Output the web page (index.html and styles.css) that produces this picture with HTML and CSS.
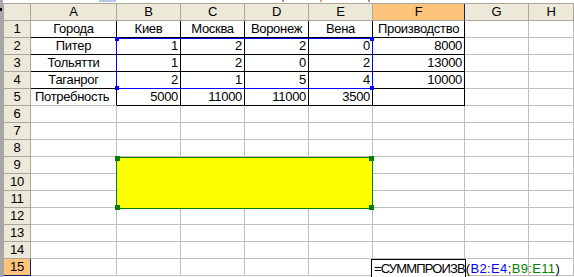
FILE: index.html
```html
<!doctype html>
<html lang="ru">
    <head>
        <meta charset="UTF-8" />
        <title>Книга1</title>
        <link rel="stylesheet" href="styles.css">
    </head>
    <body>
        <div class="window">
            <div class="edge"><span class="edge-mark"></span></div>
            <div class="main">
                <!-- bottom pixels of the formula bar above the sheet -->
                <div class="topstrip">
                    <span class="namebox-btn"></span>
                    <span class="speck speck-dark" style="left: 279px"></span>
                    <span class="speck speck-orange" style="left: 317px"></span>
                    <span class="speck speck-dark" style="left: 365px"></span>
                </div>
                <div class="sheet">
                    <div class="grid">
                        <!-- column headers -->
                        <div class="hd corner"></div>
                        <div class="hd col">A</div>
                        <div class="hd col">B</div>
                        <div class="hd col">C</div>
                        <div class="hd col">D</div>
                        <div class="hd col">E</div>
                        <div class="hd col active">F</div>
                        <div class="hd col">G</div>
                        <div class="hd col">H</div>

                        <!-- row 1 -->
                        <div class="hd row">1</div>
                        <div class="c mid bk">Города</div>
                        <div class="c mid bk">Киев</div>
                        <div class="c mid bk">Москва</div>
                        <div class="c mid bk">Воронеж</div>
                        <div class="c mid bk">Вена</div>
                        <div class="c mid bk">Производство</div>
                        <div class="c"></div>
                        <div class="c"></div>

                        <!-- row 2 -->
                        <div class="hd row">2</div>
                        <div class="c mid bk">Питер</div>
                        <div class="c num bk">1</div>
                        <div class="c num bk">2</div>
                        <div class="c num bk">2</div>
                        <div class="c num bk">0</div>
                        <div class="c num bk">8000</div>
                        <div class="c"></div>
                        <div class="c"></div>

                        <!-- row 3 -->
                        <div class="hd row">3</div>
                        <div class="c mid bk">Тольятти</div>
                        <div class="c num bk">1</div>
                        <div class="c num bk">2</div>
                        <div class="c num bk">0</div>
                        <div class="c num bk">2</div>
                        <div class="c num bk">13000</div>
                        <div class="c"></div>
                        <div class="c"></div>

                        <!-- row 4 -->
                        <div class="hd row">4</div>
                        <div class="c mid bk">Таганрог</div>
                        <div class="c num bk">2</div>
                        <div class="c num bk">1</div>
                        <div class="c num bk">5</div>
                        <div class="c num bk">4</div>
                        <div class="c num bk">10000</div>
                        <div class="c"></div>
                        <div class="c"></div>

                        <!-- row 5 -->
                        <div class="hd row">5</div>
                        <div class="c left bk-right">Потребность</div>
                        <div class="c num bk">5000</div>
                        <div class="c num bk">11000</div>
                        <div class="c num bk">11000</div>
                        <div class="c num bk">3500</div>
                        <div class="c num bk"></div>
                        <div class="c"></div>
                        <div class="c"></div>
                    </div>
                    <div class="grid" id="emptyRows"></div>

                    <!-- reference highlight B2:E4 -->
                    <div class="range range-blue">
                        <span class="handle tl"></span>
                        <span class="handle tr"></span>
                        <span class="handle bl"></span>
                        <span class="handle br"></span>
                    </div>

                    <!-- yellow shape B9:E11 -->
                    <div class="range shape">
                        <span class="handle tl"></span>
                        <span class="handle tr"></span>
                        <span class="handle bl"></span>
                        <span class="handle br"></span>
                    </div>

                    <!-- formula being edited in F15 -->
                    <div class="edit">=СУММПРОИЗВ<span class="args">(<span class="ref-blue">B2:E4</span>;<span class="ref-green">B9:E11</span>)</span></div>
                </div>
            </div>
        </div>

        <script>
            const emptyRows = document.getElementById("emptyRows");
            for (let r = 6; r <= 15; r++) {
                const head = document.createElement("div");
                head.className = r === 15 ? "hd row active" : "hd row";
                head.textContent = r;
                emptyRows.appendChild(head);
                for (let i = 0; i < 8; i++) {
                    const cell = document.createElement("div");
                    cell.className = "c";
                    emptyRows.appendChild(cell);
                }
            }
        </script>
    </body>
</html>
```

FILE: styles.css
```css
html,
body {
    margin: 0;
    padding: 0;
    height: 100%;
    overflow: hidden;
    background: #ffffff;
}

body {
    font-family: "Liberation Sans", Arial, sans-serif;
    font-size: 13px;
    letter-spacing: -0.3px;
    color: #000000;
}

.window {
    display: flex;
    height: 100%;
}

.edge {
    width: 3px;
    flex: none;
    background: #a7a6aa;
    position: relative;
}

.edge-mark {
    position: absolute;
    top: 8px;
    left: 0;
    width: 2px;
    height: 3px;
    background: #000000;
}

.main {
    flex: 1;
    display: flex;
    flex-direction: column;
    min-width: 0;
}

.topstrip {
    height: 3px;
    flex: none;
    overflow: hidden;
    position: relative;
}

.namebox-btn {
    position: absolute;
    left: 96px;
    top: 0;
    width: 17px;
    height: 2px;
    background: #b4c8f0;
}

.speck {
    position: absolute;
    top: 0;
    width: 2px;
    height: 2px;
}

.speck-dark {
    background: #9a9a9a;
}

.speck-orange {
    background: #f0a070;
}

.sheet {
    position: relative;
    border-top: 1px solid #aca899;
}

.grid {
    display: grid;
    grid-template-columns: 28px 86px 64px 64px 64px 64px 92px 64px 1fr;
    grid-auto-rows: 17px;
}

.grid > div {
    box-sizing: border-box;
    border-right: 1px solid #c0c0c0;
    border-bottom: 1px solid #c0c0c0;
    line-height: 16px;
    white-space: nowrap;
    overflow: hidden;
}

.hd {
    background: #ece9d8;
    text-align: center;
    border-right-color: #aca899 !important;
    border-bottom-color: #aca899 !important;
}

.hd.corner,
.hd.row {
    border-left: 1px solid #aca899;
}

.hd.active {
    background: #ffc47c;
}

.hd.col.active {
    border-right-color: #0a246a !important;
}

.hd.row.active {
    border-right-color: #0a246a !important;
    border-bottom-color: #0a246a !important;
}

.c {
    padding: 0 2px;
}

.mid {
    text-align: center;
}

.num {
    text-align: right;
}

.left {
    text-align: left;
    padding-left: 4px;
}

.grid > .bk {
    border-right-color: #000000;
    border-bottom-color: #000000;
}

.grid > .bk-right {
    border-right-color: #000000;
}

/* overlays */
.range {
    position: absolute;
    box-sizing: border-box;
}

.range-blue {
    left: 113px;
    top: 34px;
    width: 257px;
    height: 51px;
    border: 1px solid #0000ff;
}

.range-blue .handle {
    background: #0000ff;
}

.shape {
    left: 113px;
    top: 153px;
    width: 257px;
    height: 52px;
    background: #ffff00;
    border: 1px solid #008000;
}

.shape .handle {
    background: #008000;
    width: 5px;
    height: 5px;
}

.handle {
    position: absolute;
    width: 4px;
    height: 4px;
}

.handle.tl {
    left: -2px;
    top: -2px;
}

.handle.tr {
    right: -2px;
    top: -2px;
}

.handle.bl {
    left: -2px;
    bottom: -2px;
}

.handle.br {
    right: -2px;
    bottom: -2px;
}

.edit {
    position: absolute;
    left: 368px;
    top: 255px;
    width: 95px;
    height: 19px;
    box-sizing: border-box;
    border: 1px solid #000000;
    background: #ffffff;
    padding-left: 2px;
    line-height: 17px;
    letter-spacing: -0.85px;
    white-space: nowrap;
    overflow: visible;
}

.edit .args {
    padding-left: 1px;
    letter-spacing: 0.35px;
}

.ref-blue {
    color: #0000ff;
}

.ref-green {
    color: #008000;
}
```
